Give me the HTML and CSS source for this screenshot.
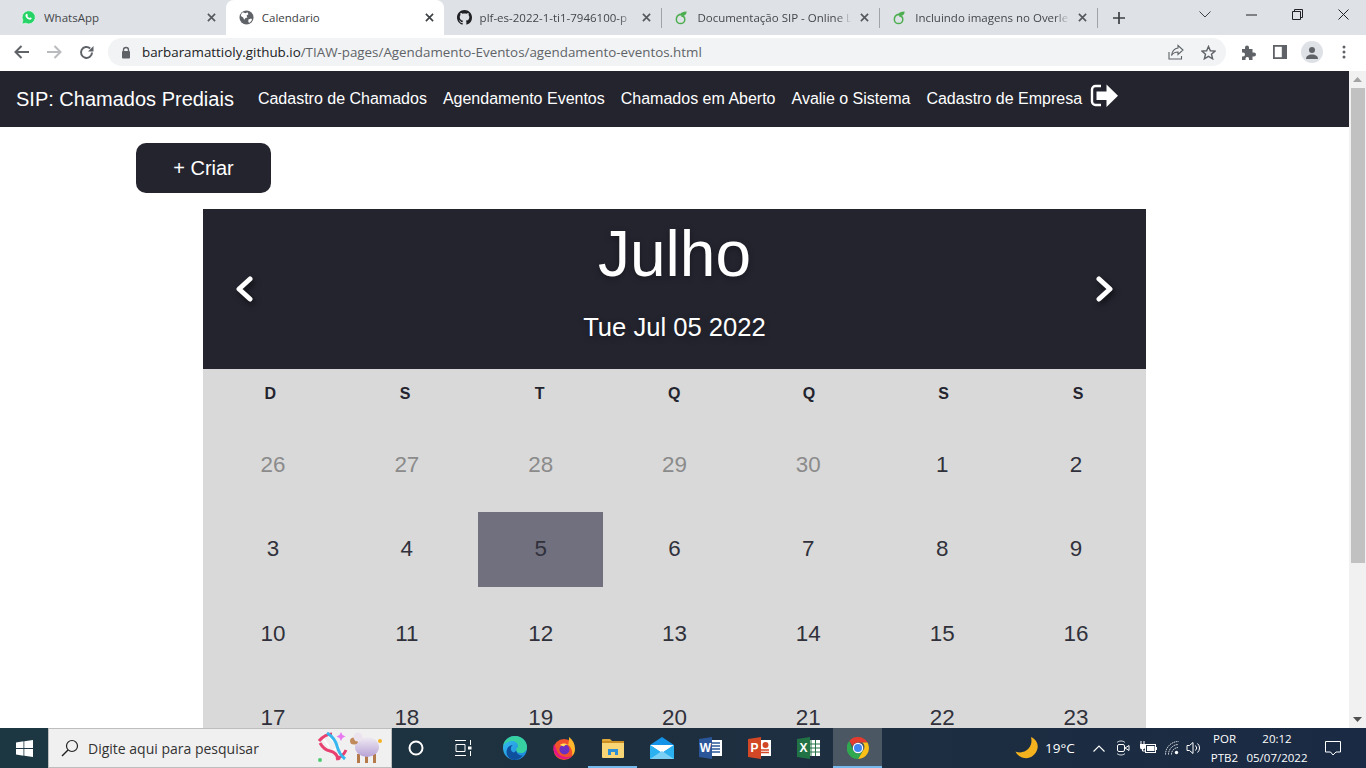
FILE: index.html
```html
<!DOCTYPE html>
<html lang="pt-BR">
<head>
  <meta charset="UTF-8">
  <title>Calendario</title>
  <link rel="stylesheet" href="styles.css">
</head>
<body>
  <!-- abas do navegador -->
  <div class="tabstrip">
    <div class="tab">
      <svg class="favicon" viewBox="0 0 16 16"><path d="M1 15l1-4A7 7 0 1 1 5 14z" fill="#25d366" stroke="#fff" stroke-width=".6"/><path d="M5.600 4.200c.4-.4.9-.4 1.100 0l.6 1.300-.6.800c.5 1 1.300 1.800 2.400 2.300l.8-.7 1.300.7c.3.300.2.800-.1 1.100-.8.800-2 .7-3.200.1C6.500 9.100 5.300 7.900 4.900 6.600c-.3-1-.1-1.800.7-2.400z" fill="#fff"/></svg>
      <span class="tab-title">WhatsApp</span>
      <svg class="tab-close" viewBox="0 0 10 10"><path d="M1 1l8 8M9 1l-8 8" stroke="#55585c" stroke-width="1.800"/></svg>
    </div>
    <div class="tab tab-active">
      <svg class="favicon" viewBox="0 0 16 16"><circle cx="8" cy="8" r="7.500" fill="#5f6368"/><path d="M4 2.500l3 1 2-1 1 2-2 1.500 1 2-2 .5-1.500 2-1-2.500L2 6.500 2.500 4zM10 10l3-1 1 1.500-2.500 3-1.500-.5z" fill="#fff"/></svg>
      <span class="tab-title">Calendario</span>
      <svg class="tab-close" viewBox="0 0 10 10"><path d="M1 1l8 8M9 1l-8 8" stroke="#3c4043" stroke-width="1.800"/></svg>
    </div>
    <div class="tab">
      <svg class="favicon" viewBox="0 0 16 16"><path fill="#202124" d="M8 0C3.580 0 0 3.580 0 8c0 3.540 2.290 6.530 5.470 7.590.4.070.55-.17.55-.38 0-.19-.01-.82-.01-1.490-2.010.37-2.530-.49-2.690-.94-.09-.23-.48-.94-.82-1.130-.28-.15-.68-.52-.01-.53.63-.01 1.080.58 1.230.82.72 1.210 1.870.87 2.330.66.070-.52.28-.87.51-1.070-1.780-.2-3.640-.89-3.640-3.950 0-.87.31-1.590.82-2.150-.08-.2-.36-1.020.08-2.120 0 0 .67-.21 2.200.82.64-.18 1.320-.27 2-.27.68 0 1.360.09 2 .27 1.530-1.040 2.200-.82 2.200-.82.44 1.100.16 1.920.08 2.120.51.56.82 1.270.82 2.150 0 3.070-1.870 3.750-3.650 3.950.29.25.54.73.54 1.480 0 1.070-.01 1.930-.01 2.200 0 .21.15.46.55.38A8.013 8.013 0 0 0 16 8c0-4.420-3.580-8-8-8z"/></svg>
      <span class="tab-title tab-fade">plf-es-2022-1-ti1-7946100-p</span>
      <svg class="tab-close" viewBox="0 0 10 10"><path d="M1 1l8 8M9 1l-8 8" stroke="#55585c" stroke-width="1.800"/></svg>
    </div>
    <span class="tab-sep"></span>
    <div class="tab">
      <svg class="favicon" viewBox="0 0 16 16"><path d="M6.500 4.500C4 5.500 2.500 7.500 2.500 10a4.500 4.500 0 0 0 9 0c0-2.200-1.700-3.700-3.700-3.700" fill="none" stroke="#4cae4f" stroke-width="1.600"/><path d="M5.500 5.500C6.500 3 9.500 1.500 13.500 1.500c0 2.500-1.500 4.300-4 4.800z" fill="#4cae4f"/></svg>
      <span class="tab-title tab-fade">Documentação SIP - Online L</span>
      <svg class="tab-close" viewBox="0 0 10 10"><path d="M1 1l8 8M9 1l-8 8" stroke="#55585c" stroke-width="1.800"/></svg>
    </div>
    <span class="tab-sep"></span>
    <div class="tab">
      <svg class="favicon" viewBox="0 0 16 16"><path d="M6.500 4.500C4 5.500 2.500 7.500 2.500 10a4.500 4.500 0 0 0 9 0c0-2.200-1.700-3.700-3.700-3.700" fill="none" stroke="#4cae4f" stroke-width="1.600"/><path d="M5.500 5.500C6.500 3 9.500 1.500 13.500 1.500c0 2.500-1.500 4.300-4 4.800z" fill="#4cae4f"/></svg>
      <span class="tab-title tab-fade">Incluindo imagens no Overle</span>
      <svg class="tab-close" viewBox="0 0 10 10"><path d="M1 1l8 8M9 1l-8 8" stroke="#55585c" stroke-width="1.800"/></svg>
    </div>
    <span class="tab-sep"></span>
    <svg class="new-tab" viewBox="0 0 12 12"><path d="M6 0v12M0 6h12" stroke="#3c4043" stroke-width="1.700"/></svg>
    <div class="win-controls">
      <span class="win-btn"><svg width="12" height="7" viewBox="0 0 12 7"><path d="M.5.500L6 6l5.500-5.500" fill="none" stroke="#3c4043"/></svg></span>
      <span class="win-btn"><svg width="11" height="2" viewBox="0 0 11 2"><path d="M0 1h11" stroke="#202124"/></svg></span>
      <span class="win-btn"><svg width="11" height="11" viewBox="0 0 11 11"><path d="M.5 2.500h8v8h-8zM2.500 2.500v-2h8v8h-2" fill="none" stroke="#202124"/></svg></span>
      <span class="win-btn"><svg width="11" height="11" viewBox="0 0 11 11"><path d="M.5.500l10 10M10.500.500l-10 10" stroke="#202124"/></svg></span>
    </div>
  </div>

  <!-- barra de endereco -->
  <div class="toolbar">
    <span class="tool-btn"><svg width="16" height="14" viewBox="0 0 16 14"><path d="M15 7H2M7.500 1L1.500 7l6 6" fill="none" stroke="#5f6368" stroke-width="2"/></svg></span>
    <span class="tool-btn"><svg width="16" height="14" viewBox="0 0 16 14"><path d="M1 7h13M8.500 1l6 6-6 6" fill="none" stroke="#b9bbbe" stroke-width="2"/></svg></span>
    <span class="tool-btn"><svg width="15" height="15" viewBox="0 0 15 15"><path d="M13 7.500A5.500 5.500 0 1 1 11.200 3.400" fill="none" stroke="#5f6368" stroke-width="2"/><path d="M14.500 1v5.500H9z" fill="#5f6368"/></svg></span>
    <div class="omnibox">
      <svg class="lock" width="12" height="13" viewBox="0 0 12 13"><path d="M3.500 5.500V4a2.500 2.500 0 0 1 5 0v1.500" fill="none" stroke="#5f6368" stroke-width="1.400"/><rect x="2" y="5" width="8" height="7.500" rx="1" fill="#5f6368"/></svg>
      <span class="url"><b>barbaramattioly.github.io</b>/TIAW-pages/Agendamento-Eventos/agendamento-eventos.html</span>
      <span class="tool-btn"><svg width="16" height="16" viewBox="0 0 16 16"><path d="M1 8v7h12.500v-3" fill="none" stroke="#5f6368" stroke-width="1.100"/><path d="M10 1.500l5 4.500-5 4.500V8C7 8 5 9 3.500 11.500 4 7.500 6.500 4.500 10 4z" fill="none" stroke="#5f6368" stroke-width="1.100"/></svg></span>
      <span class="tool-btn"><svg width="15" height="15" viewBox="0 0 16 16"><path d="M8 1.500l2 4.600 5 .4-3.800 3.300 1.200 4.900L8 12.100l-4.400 2.600 1.200-4.900L1 6.500l5-.4z" fill="none" stroke="#5f6368" stroke-width="1.500"/></svg></span>
    </div>
    <span class="tool-btn"><svg width="15" height="15" viewBox="0 0 15 15"><path d="M1 4h3V2.500a2 2 0 0 1 4 0V4h3.500v3.500H13a2 2 0 0 1 0 4h-1.500V15H8v-1.500a1.800 1.800 0 0 0-3.500 0V15H1v-3.500h1a2 2 0 0 0 0-4H1z" fill="#5f6368"/></svg></span>
    <span class="tool-btn"><svg width="14" height="14" viewBox="0 0 14 14"><path d="M0 0h14v14H0z" fill="#5f6368"/><path d="M1.800 1.800h7v10.400h-7z" fill="#fff"/></svg></span>
    <span class="tool-btn"><span class="avatar"><svg width="14" height="12" viewBox="0 0 14 12"><circle cx="7" cy="3" r="3" fill="#5f6368"/><path d="M1 12c0-3 2.500-4.500 6-4.500s6 1.500 6 4.500z" fill="#5f6368"/></svg></span></span>
    <span class="tool-btn"><svg width="4" height="14" viewBox="0 0 4 14"><circle cx="2" cy="2" r="1.500" fill="#5f6368"/><circle cx="2" cy="7" r="1.500" fill="#5f6368"/><circle cx="2" cy="12" r="1.500" fill="#5f6368"/></svg></span>
  </div>

  <div class="viewport">
    <div class="page">
      <nav class="navbar">
        <a class="brand">SIP: Chamados Prediais</a>
        <a class="nav-link">Cadastro de Chamados</a>
        <a class="nav-link">Agendamento Eventos</a>
        <a class="nav-link">Chamados em Aberto</a>
        <a class="nav-link">Avalie o Sistema</a>
        <a class="nav-link">Cadastro de Empresa</a>
        <svg class="logout" width="29" height="24" viewBox="0 0 29 24"><path d="M11 2H5.500A3.500 3.500 0 0 0 2 5.500v12A3.500 3.500 0 0 0 5.500 21H11" fill="none" stroke="#fff" stroke-width="2.400"/><path d="M6.500 7.500h10V.5L28 11.700 16.500 23v-7h-10z" fill="#fff"/></svg>
      </nav>

      <button class="btn-criar">+ Criar</button>

      <div class="calendar">
        <div class="cal-head">
          <svg class="cal-arrow" width="18" height="26" viewBox="0 0 18 26"><path d="M15 3L4 13l11 10" fill="none" stroke="#fff" stroke-width="5" stroke-linecap="round" stroke-linejoin="round"/></svg>
          <div class="cal-title">
            <h1>Julho</h1>
            <p>Tue Jul 05 2022</p>
          </div>
          <svg class="cal-arrow" width="18" height="26" viewBox="0 0 18 26"><path d="M3 3l11 10L3 23" fill="none" stroke="#fff" stroke-width="5" stroke-linecap="round" stroke-linejoin="round"/></svg>
        </div>
        <div class="weekdays">
          <div>D</div><div>S</div><div>T</div><div>Q</div><div>Q</div><div>S</div><div>S</div>
        </div>
        <div class="days">
          <div class="prev">26</div><div class="prev">27</div><div class="prev">28</div><div class="prev">29</div><div class="prev">30</div><div>1</div><div>2</div>
          <div>3</div><div>4</div><div class="today">5</div><div>6</div><div>7</div><div>8</div><div>9</div>
          <div>10</div><div>11</div><div>12</div><div>13</div><div>14</div><div>15</div><div>16</div>
          <div>17</div><div>18</div><div>19</div><div>20</div><div>21</div><div>22</div><div>23</div>
        </div>
      </div>
    </div>
    <div class="scrollbar">
      <span class="sb-btn"><svg width="9" height="5" viewBox="0 0 9 5"><path d="M4.500 0L9 5H0z" fill="#a3a3a3"/></svg></span>
      <div class="sb-thumb"></div>
      <span class="sb-btn sb-btn-down"><svg width="9" height="5" viewBox="0 0 9 5"><path d="M0 0h9L4.500 5z" fill="#505050"/></svg></span>
    </div>
  </div>

  <!-- barra de tarefas -->
  <div class="taskbar">
    <span class="task-start"><svg width="17" height="17" viewBox="0 0 17 17"><path d="M0 2.400L7.500 1.300v6.800H0zM8.300 1.200L17 0v8.100H8.300zM0 8.900h7.500v6.800L0 14.600zM8.300 8.900H17V17l-8.700-1.200z" fill="#fff"/></svg></span>
    <div class="task-search">
      <svg width="18" height="18" viewBox="0 0 18 18"><circle cx="11" cy="7" r="5.500" fill="none" stroke="#222" stroke-width="1.200"/><path d="M7 11l-6 6" stroke="#222" stroke-width="1.400"/></svg>
      <span class="search-text">Digite aqui para pesquisar</span>
      <svg class="search-art" width="66" height="36" viewBox="0 0 66 36">
        <defs>
          <linearGradient id="wool" x1="0" y1="0" x2="0" y2="1"><stop offset="0" stop-color="#f0ebf3"/><stop offset="1" stop-color="#b7a2d6"/></linearGradient>
        </defs>
        <!-- dna -->
        <path d="M6 8l6 9M10 5l7 7M15 21l8-5M19 26l8-5" stroke="#fff" stroke-width="1.500"/>
        <path d="M2 11Q8 4 15 4" fill="none" stroke="#e8416f" stroke-width="3"/>
        <path d="M3 13Q7 20 13 21T22 30" fill="none" stroke="#e8416f" stroke-width="3"/>
        <path d="M19 29Q26 27 29 20" fill="none" stroke="#e8416f" stroke-width="3"/>
        <path d="M10 3Q18 8 20 16T28 29" fill="none" stroke="#38b6ee" stroke-width="3"/>
        <path d="M24 2l1.500 3 3 1.500-3 1.500-1.500 3-1.500-3-3-1.500 3-1.500z" fill="#e879f0"/>
        <circle cx="3" cy="30" r="2" fill="#4ecb71"/>
        <circle cx="63" cy="11" r="2" fill="#f4b322"/>
        <!-- ovelha -->
        <path d="M40 24h3v9h-3zM48 25h3v8h-3zM56 24h3v9h-3z" fill="#b57a4a"/>
        <ellipse cx="50" cy="17" rx="12" ry="10" fill="url(#wool)"/>
        <ellipse cx="37" cy="11" rx="4" ry="3.500" fill="#c08a5a"/>
        <circle cx="41" cy="7" r="4.500" fill="#ebe4ee"/>
      </svg>
    </div>
    <span class="task-cell"><svg width="16" height="16" viewBox="0 0 16 16"><circle cx="8" cy="8" r="6.500" fill="none" stroke="#fff" stroke-width="2"/></svg></span>
    <span class="task-cell task-view"><svg width="17" height="16" viewBox="0 0 17 16"><path d="M0 .5h11M0 15.500h11M1 4.500h9v7H1zM15.500 0v5M15.500 11v5" fill="none" stroke="#fff"/><rect x="13" y="6.500" width="3.500" height="3" fill="#fff"/></svg></span>

    <span class="task-app"><svg width="24" height="24" viewBox="0 0 24 24">
      <defs>
        <linearGradient id="edgeA" x1="0" y1="0" x2="1" y2="1"><stop offset="0" stop-color="#35c1f1"/><stop offset="1" stop-color="#1b7fd6"/></linearGradient>
      </defs>
      <circle cx="12" cy="12" r="12" fill="url(#edgeA)"/>
      <path d="M12 0c6 0 12 4.500 12 11 0 4-3 6-6 6s-5-1-5-3c0-2 2-2 2-4 0-3-3-5-6-5C5 5 2 7 0 10 1 4 6 0 12 0z" fill="#37d0a0"/>
      <path d="M13.500 14c-.5 3 2 5.500 6 5.500-2 2.800-5 4.500-8 4.500-4 0-8-3.500-8-8 0-4 3-7 6.500-7-2.500 1.500-3 5 -.5 7 1.500 1 3 0 4-2z" fill="#0e4f9e"/>
    </svg></span>
    <span class="task-app"><svg width="24" height="24" viewBox="0 0 24 24">
      <circle cx="12" cy="13.500" r="10.500" fill="#f0532b"/>
      <path d="M17 1c4 3 6 7 6 12 0 3-1 5-3 7 1-5-1-9-4-11 1-3 1-5 1-8z" fill="#ffb72b"/>
      <path d="M2 8c-1 3-1 8 2 11 4 5 12 5 16 1-5 2-11 1-14-3C4 14 4 11 2 8z" fill="#e31587"/>
      <circle cx="12.500" cy="13.500" r="5" fill="#6b2fc2"/>
      <path d="M8 9c2-2 6-2 8 0-2-.5-3 0-4 1.500C10.500 10 9 9.500 8 9z" fill="#ffdf5a"/>
    </svg></span>
    <span class="task-app task-app-open"><svg width="22" height="20" viewBox="0 0 22 20">
      <path d="M0 2a1 1 0 0 1 1-1h7l2 2h-10z" fill="#e0a93a"/>
      <path d="M0 3h22v2H0z" fill="#c98f22"/>
      <path d="M0 5h22v14a1 1 0 0 1-1 1H1a1 1 0 0 1-1-1z" fill="#f8d675"/>
      <path d="M6 17v-6h10v6h-3v-3H9v3z" fill="#2d8fd5"/>
    </svg></span>
    <span class="task-app"><svg width="24" height="22" viewBox="0 0 24 22">
      <path d="M0 8L12 0l12 8v14H0z" fill="#1293e8"/>
      <path d="M0 8h24l-12 8z" fill="#fff"/>
      <path d="M0 8l12 8 12-8v14H0z" fill="#2bb0f0"/>
      <path d="M0 22l12-8 12 8z" fill="#7ad0f5"/>
    </svg></span>
    <span class="task-app"><svg width="23" height="22" viewBox="0 0 23 22">
      <rect x="9" y="3" width="14" height="16" fill="#fff"/>
      <path d="M13 6h8M13 9h8M13 12h8M13 15h8" stroke="#2b579a" stroke-width="1.400"/>
      <path d="M0 2l13-2v22L0 20z" fill="#2b579a"/>
      <text class="app-letter" x="6.500" y="15" text-anchor="middle">W</text>
    </svg></span>
    <span class="task-app"><svg width="23" height="22" viewBox="0 0 23 22">
      <rect x="9" y="3" width="14" height="16" fill="#fff"/>
      <circle cx="17.500" cy="8" r="3" fill="#d24726"/>
      <path d="M13 13h8M13 15.500h8" stroke="#d24726" stroke-width="1.400"/>
      <path d="M0 2l13-2v22L0 20z" fill="#d24726"/>
      <text class="app-letter" x="6.500" y="15" text-anchor="middle">P</text>
    </svg></span>
    <span class="task-app"><svg width="23" height="22" viewBox="0 0 23 22">
      <rect x="9" y="3" width="14" height="16" fill="#fff"/>
      <path d="M14 3v16M18.500 3v16M9 7h14M9 11h14M9 15h14" stroke="#217346" stroke-width="1"/>
      <path d="M0 2l13-2v22L0 20z" fill="#217346"/>
      <text class="app-letter" x="6.500" y="15" text-anchor="middle">X</text>
    </svg></span>
    <span class="task-app task-app-active"><svg width="22" height="22" viewBox="0 0 22 22">
      <path d="M11 0a11 11 0 0 1 9.500 5.500H11a5.500 5.500 0 0 0-5.200 3.700L2.300 3.900A11 11 0 0 1 11 0z" fill="#e33b2e"/>
      <path d="M20.500 5.500A11 11 0 0 1 11 22l4.800-8.200a5.500 5.500 0 0 0-.4-8.300z" fill="#fbc116"/>
      <path d="M2.300 3.900A11 11 0 0 0 11 22l4.800-8.200a5.500 5.500 0 0 1-9.600-.2z" fill="#2fa84f"/>
      <circle cx="11" cy="11" r="5.200" fill="#fff"/>
      <circle cx="11" cy="11" r="4" fill="#3f86f4"/>
    </svg></span>

    <div class="tray">
      <svg class="tray-moon" width="24" height="24" viewBox="0 0 24 24"><path d="M16 1c5 2 7.500 7 6.500 11.500C21 19 15 23 9 22c-4-.7-7-3-8.500-6.500 5 2 10.500.5 13.500-3.500 2.500-3.200 3-7 2-11z" fill="#f5b21f"/></svg>
      <span class="tray-temp">19°C</span>
      <span class="tray-cell tray-caret"><svg width="12" height="7" viewBox="0 0 12 7"><path d="M.5 6.500L6 1l5.500 5.500" fill="none" stroke="#fff" stroke-width="1.100"/></svg></span>
      <span class="tray-cell tray-meet"><svg width="15" height="16" viewBox="0 0 15 16"><path d="M2 2.500C4 .5 8 .5 10 2.500M2 13.500C4 15.500 8 15.500 10 13.500" fill="none" stroke="#fff" stroke-width=".8"/><rect x="2.500" y="4.500" width="7" height="7" rx="1.500" fill="none" stroke="#fff"/><path d="M10 8l4-2.500v5z" fill="none" stroke="#fff"/></svg></span>
      <span class="tray-cell tray-batt"><svg width="18" height="14" viewBox="0 0 18 14"><path d="M2 0v3M5 0v3" stroke="#fff"/><path d="M1 3h5v3a2.500 2.500 0 0 1-5 0z" fill="#fff"/><path d="M3.500 8v2h3" fill="none" stroke="#fff"/><rect x="6.500" y="3.500" width="10" height="8" fill="none" stroke="#fff"/><rect x="8" y="5" width="7.500" height="5" fill="#fff"/><rect x="17" y="6" width="1" height="3" fill="#fff"/></svg></span>
      <span class="tray-cell tray-wifi"><svg width="14" height="14" viewBox="0 0 14 14"><path d="M.5 13.500A13 13 0 0 1 13.500 .5M3.500 13.500A10 10 0 0 1 13 3.500M6.500 13.500A7 7 0 0 1 13 6.500" fill="none" stroke="#fff" stroke-width=".9" stroke-dasharray="1.500 .7"/><circle cx="11.500" cy="11.500" r="1.700" fill="#fff"/></svg></span>
      <span class="tray-cell tray-vol"><svg width="16" height="14" viewBox="0 0 16 14"><path d="M1 4.500h2.500L7 1.500v11L3.500 9.500H1z" fill="none" stroke="#fff"/><path d="M9.500 4.500a3.500 3.500 0 0 1 0 5M11.500 2.500a6 6 0 0 1 0 9" fill="none" stroke="#fff"/></svg></span>
      <div class="tray-text tray-lang"><span>POR</span><span>PTB2</span></div>
      <div class="tray-text tray-clock"><span>20:12</span><span>05/07/2022</span></div>
      <span class="tray-cell tray-notif"><svg width="16" height="15" viewBox="0 0 16 15"><path d="M.5.500h15v10.500h-4.500L8 14 5.500 11H.5z" fill="none" stroke="#fff"/></svg></span>
    </div>
  </div>
</body>
</html>
```

FILE: styles.css
```css
html, body {
  margin: 0;
  height: 768px;
  overflow: hidden;
}
body {
  display: flex;
  flex-direction: column;
  font-family: "Liberation Sans", Arial, sans-serif;
  background-color: #fff;
}
svg {
  display: block;
  flex: none;
}

/* abas */
.tabstrip {
  height: 35px;
  flex: none;
  display: flex;
  align-items: center;
  padding-left: 8px;
  background-color: #dee1e6;
  font-family: "Open Sans", sans-serif;
  font-size: 11.5px;
  color: #45474a;
}
.tab {
  width: 217.8px;
  height: 35px;
  flex: none;
  box-sizing: border-box;
  display: flex;
  align-items: center;
  padding: 0 10px 1px 13px;
}
.tab-active {
  background-color: #fff;
  border-radius: 8px 8px 0 0;
  color: #3c4043;
}
.favicon {
  width: 15px;
  height: 15px;
  margin-right: 8px;
}
.tab-title {
  flex: 1;
  overflow: hidden;
  white-space: nowrap;
}
.tab-fade {
  -webkit-mask-image: linear-gradient(90deg, #000 90%, transparent 100%);
  mask-image: linear-gradient(90deg, #000 90%, transparent 100%);
}
.tab-close {
  width: 9px;
  height: 9px;
  margin-left: 8px;
}
.tab-sep {
  width: 1px;
  height: 20px;
  margin-right: -1px;
  background-color: #a0a3a7;
}
.new-tab {
  width: 12px;
  height: 12px;
  margin-left: 16px;
}
.win-controls {
  margin-left: auto;
  align-self: flex-start;
  display: flex;
}
.win-btn {
  width: 46px;
  height: 29px;
  display: flex;
  align-items: center;
  justify-content: center;
}

/* barra de endereco */
.toolbar {
  height: 36px;
  flex: none;
  box-sizing: border-box;
  display: flex;
  align-items: center;
  padding: 0 0 2px 6px;
  background-color: #fff;
}
.tool-btn {
  width: 32px;
  height: 28px;
  flex: none;
  display: flex;
  align-items: center;
  justify-content: center;
}
.omnibox {
  width: 1118px;
  height: 28px;
  flex: none;
  box-sizing: border-box;
  margin: 0 6px;
  padding: 0 2px 0 12px;
  display: flex;
  align-items: center;
  border-radius: 14px;
  background-color: #f1f3f4;
}
.lock {
  margin-right: 10px;
}
.url {
  flex: 1;
  font-family: "Open Sans", sans-serif;
  font-size: 13.36px;
  color: #5f6368;
  white-space: nowrap;
}
.url b {
  font-weight: normal;
  color: #202124;
}
.avatar {
  width: 22px;
  height: 22px;
  display: flex;
  align-items: flex-end;
  justify-content: center;
  box-sizing: border-box;
  padding-bottom: 4px;
  border-radius: 50%;
  background-color: #dee1e6;
}

/* pagina */
.viewport {
  flex: 1;
  min-height: 0;
  display: flex;
}
.page {
  flex: 1;
  min-width: 0;
  overflow: hidden;
}
.navbar {
  height: 56px;
  display: flex;
  align-items: center;
  padding-left: 16px;
  background-color: #23242e;
  color: #fff;
}
.brand {
  font-size: 20px;
  margin-right: 24px;
}
.nav-link {
  font-size: 16px;
  margin-right: 16px;
}
.nav-link:last-of-type {
  margin-right: 8px;
}
.logout {
  margin-top: -7px;
}
.btn-criar {
  display: block;
  width: 135px;
  height: 50px;
  margin: 16px 0 16px 136px;
  padding: 0;
  border: none;
  border-radius: 10px;
  background-color: #23242e;
  color: #fff;
  font-family: inherit;
  font-size: 20px;
}
.calendar {
  width: 943px;
  margin-left: 203px;
  background-color: #d9d9d9;
}
.cal-head {
  height: 160px;
  box-sizing: border-box;
  display: flex;
  align-items: center;
  justify-content: space-between;
  padding: 0 32px;
  background-color: #23242e;
  color: #fff;
}
.cal-arrow {
  filter: drop-shadow(2px 3px 3px rgba(0, 0, 0, .6));
}
.cal-title {
  margin-bottom: 19px;
  text-align: center;
  text-shadow: 0 2px 6px rgba(0, 0, 0, .35);
}
.cal-title h1 {
  margin: 0;
  font-size: 64px;
  font-weight: normal;
  line-height: 77px;
}
.cal-title p {
  margin: 19px 0 0;
  font-size: 25.6px;
  line-height: 31px;
}
.weekdays {
  height: 58.5px;
  display: grid;
  grid-template-columns: repeat(7, 1fr);
  padding: 15px .5px 0 0;
  box-sizing: border-box;
  font-size: 16px;
  font-weight: bold;
  line-height: 20px;
  text-align: center;
  color: #23242e;
}
.days {
  display: grid;
  grid-template-columns: repeat(7, 125px);
  grid-auto-rows: 75px;
  column-gap: 8.83px;
  row-gap: 9.4px;
  padding: 0 7.5px;
  font-size: 22.4px;
  color: #30313b;
}
.days div {
  display: flex;
  align-items: center;
  justify-content: center;
}
.days .prev {
  color: #8b8b8b;
}
.days .today {
  background-color: #70707e;
}

/* scrollbar */
.scrollbar {
  width: 17px;
  flex: none;
  display: flex;
  flex-direction: column;
  background-color: #f1f1f1;
}
.sb-btn {
  height: 17px;
  flex: none;
  display: flex;
  align-items: center;
  justify-content: center;
}
.sb-thumb {
  height: 475px;
  margin: 0 1px 0 2px;
  background-color: #c1c1c1;
}
.sb-btn-down {
  margin-top: auto;
}

/* barra de tarefas */
.taskbar {
  height: 40px;
  flex: none;
  display: flex;
  align-items: center;
  background: linear-gradient(90deg, #1c3742, #1e303f 45%, #1a2a44);
  color: #fff;
  font-family: "Open Sans", sans-serif;
}
.task-start {
  width: 48px;
  height: 40px;
  display: flex;
  align-items: center;
  justify-content: center;
}
.task-search {
  width: 344px;
  height: 40px;
  box-sizing: border-box;
  display: flex;
  align-items: center;
  padding: 0 8px 0 12px;
  background-color: #f0f0f0;
  border: 1px solid #bdbdbd;
  color: #333;
}
.search-text {
  margin-left: 9px;
  font-size: 14px;
  white-space: nowrap;
}
.search-art {
  margin-left: auto;
}
.task-cell {
  width: 48px;
  height: 40px;
  display: flex;
  align-items: center;
  justify-content: center;
}
.task-view {
  width: 50px;
  box-sizing: border-box;
  padding-right: 3px;
}
.task-app {
  width: 49px;
  height: 40px;
  box-sizing: border-box;
  display: flex;
  align-items: center;
  justify-content: center;
  flex: none;
}
.task-app-open {
  box-shadow: inset 0 -2px 0 #76b9ed;
}
.task-app-active {
  background-color: #4b5863;
  box-shadow: inset 0 -2px 0 #76b9ed;
}
.app-letter {
  font-family: "Liberation Sans", sans-serif;
  font-size: 12px;
  font-weight: bold;
  fill: #fff;
}
.tray {
  margin-left: auto;
  width: 352px;
  height: 40px;
  display: flex;
  align-items: center;
}
.tray-moon {
  margin: 0 6px 0 1px;
}
.tray-temp {
  width: 42px;
  font-size: 13.5px;
  white-space: nowrap;
}
.tray-cell {
  height: 40px;
  flex: none;
  display: flex;
  align-items: center;
  justify-content: center;
}
.tray-caret { width: 23px; }
.tray-meet { width: 25px; }
.tray-batt { width: 25px; }
.tray-wifi { width: 23px; }
.tray-vol { width: 21px; }
.tray-notif { width: 48px; }
.tray-text {
  display: flex;
  flex-direction: column;
  align-items: center;
  font-size: 11.5px;
  line-height: 19px;
  white-space: nowrap;
}
.tray-lang { width: 41px; }
.tray-clock { width: 64px; }
```
